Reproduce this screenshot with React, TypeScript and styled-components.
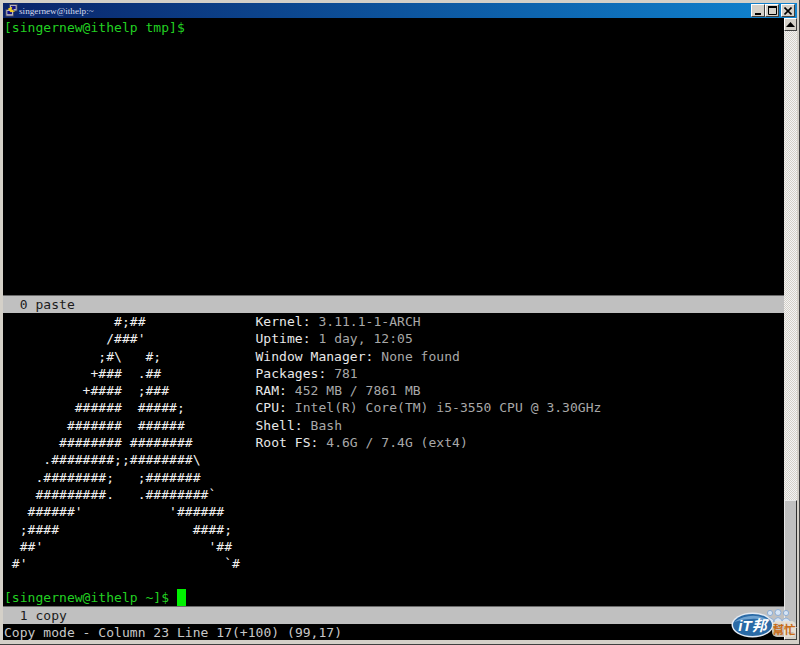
import React from 'react';
import styled, { createGlobalStyle } from 'styled-components';

const ART = [
  "              #;##",
  "             /###'",
  "            ;#\\   #;",
  "           +###  .##",
  "          +####  ;###",
  "         ######  #####;",
  "        #######  ######",
  "       ######## ########",
  "     .########;;########\\",
  "    .########;   ;#######",
  "    #########.   .########`",
  "   ######'           '######",
  "  ;####                 ####;",
  "  ##'                     '##",
  " #'                         `#",
];

const INFO = [
  ['Kernel:', '3.11.1-1-ARCH'],
  ['Uptime:', '1 day, 12:05'],
  ['Window Manager:', 'None found'],
  ['Packages:', '781'],
  ['RAM:', '452 MB / 7861 MB'],
  ['CPU:', 'Intel(R) Core(TM) i5-3550 CPU @ 3.30GHz'],
  ['Shell:', 'Bash'],
  ['Root FS:', '4.6G / 7.4G (ext4)'],
];

const App: React.FC = () => {
  return (
    <Window>
      <GlobalStyle />
      <TitleBar>
        <TitleIcon viewBox="0 0 14 14">
          <rect x="5" y="0.5" width="8" height="7" fill="#c8c8c8" stroke="#404060" />
          <rect x="6.5" y="2" width="5" height="3.5" fill="#10108a" />
          <rect x="1" y="6" width="8" height="7" fill="#c8c8c8" stroke="#404060" />
          <rect x="2.5" y="7.5" width="5" height="3.5" fill="#10108a" />
          <path d="M3 5 L8 3 L7 6 L11 8 L6 9 Z" fill="#f4d020" />
        </TitleIcon>
        <TitleText>singernew@ithelp:~</TitleText>
        <TitleButtons>
          <CaptionButton>
            <svg width="8" height="8" viewBox="0 0 8 8"><rect x="1" y="6" width="6" height="2" fill="#000" /></svg>
          </CaptionButton>
          <CaptionButton>
            <svg width="9" height="9" viewBox="0 0 9 9"><path d="M0.5 1.5H8.5V8.5H0.5Z" fill="none" stroke="#000" /><rect x="0" y="0" width="9" height="2" fill="#000" /></svg>
          </CaptionButton>
          <CloseButton>
            <svg width="8" height="8" viewBox="0 0 8 8"><path d="M0.5 0.5L7.5 7.5M7.5 0.5L0.5 7.5" stroke="#000" strokeWidth="1.6" /></svg>
          </CloseButton>
        </TitleButtons>
      </TitleBar>
      <Body>
        <Terminal>
          <TopPane>
            <Prompt>[singernew@ithelp tmp]$</Prompt>
          </TopPane>
          <StatusBar>  0 paste</StatusBar>
          <BottomPane>
            <FetchBlock>
              <Art>{ART.join('\n')}</Art>
              <InfoList>
                {INFO.map(([label, value]) => (
                  <InfoRow key={label}>
                    <InfoLabel>{label}</InfoLabel> <InfoValue>{value}</InfoValue>
                  </InfoRow>
                ))}
              </InfoList>
            </FetchBlock>
            <BlankRow />
            <Prompt>
              [singernew@ithelp ~]$ <Cursor />
            </Prompt>
          </BottomPane>
          <StatusBar>  1 copy</StatusBar>
          <MessageRow>Copy mode - Column 23 Line 17(+100) (99,17)</MessageRow>
        </Terminal>
        <Scrollbar>
          <ScrollButton>
            <svg width="9" height="5" viewBox="0 0 9 5"><path d="M4.5 0L9 5H0Z" fill="#000" /></svg>
          </ScrollButton>
          <ScrollTrack />
          <ScrollThumb />
          <ScrollButton>
            <svg width="7" height="4" viewBox="0 0 7 4"><path d="M0 0H7L3.5 4Z" fill="#000" /></svg>
          </ScrollButton>
        </Scrollbar>
      </Body>
      <Badge viewBox="0 0 68 34">
        <g fill="#d6e4f4" stroke="#86a8d2" strokeWidth="0.9">
          <circle cx="40" cy="5" r="2.6" />
          <circle cx="48" cy="4.5" r="3" />
          <circle cx="56" cy="5" r="2.6" />
          <path d="M35 14q5-8 10 0M43 14q5-9 10 0M51 14q5-8 10 0" />
        </g>
        <rect x="42" y="13" width="24" height="16" rx="5" fill="#e8e2d6" opacity="0.85" />
        <ellipse cx="22.5" cy="17" rx="21" ry="12.5" fill="#e4ebf4" />
        <ellipse cx="22.5" cy="17" rx="19.5" ry="11" fill="#2a6aa6" />
        <path d="M4 14Q22 2 41 13Q22 8 4 14Z" fill="#6ea2d0" />
        <BadgeLogoText x="22.5" y="23" textAnchor="middle">iT邦</BadgeLogoText>
        <BadgeHelpText x="54" y="26" textAnchor="middle">幫忙</BadgeHelpText>
      </Badge>
    </Window>
  );
};

export default App;

const GlobalStyle = createGlobalStyle`
  html, body {
    margin: 0;
    padding: 0;
    background: #d4d0c8;
    overflow: hidden;
  }
`;

const Window = styled.div`
  position: relative;
  width: 800px;
  height: 645px;
  box-sizing: border-box;
  padding: 3px 2px 4px 3px;
  display: flex;
  flex-direction: column;
  background: #d4d0c8;
  border-right: 1px solid #404040;
  border-bottom: 1px solid #404040;
  overflow: hidden;
  font-family: "DejaVu Sans Mono", "Liberation Mono", monospace;
`;

const TitleBar = styled.div`
  height: 15px;
  flex: none;
  display: flex;
  align-items: center;
  padding-left: 2px;
  background: linear-gradient(90deg, #0a246a 0%, #1084d0 100%);
`;

const TitleIcon = styled.svg`
  width: 13px;
  height: 13px;
  flex: none;
`;

const TitleText = styled.span`
  margin-left: 1px;
  font-family: "Liberation Serif", serif;
  font-size: 9.2px;
  color: #d4daec;
`;

const TitleButtons = styled.div`
  margin-left: auto;
  display: flex;
  padding-right: 2px;
`;

const CaptionButton = styled.div`
  width: 12px;
  height: 11px;
  box-sizing: content-box;
  display: flex;
  align-items: center;
  justify-content: center;
  background: #d4d0c8;
  border: 1px solid;
  border-color: #fff #404040 #404040 #fff;
`;

const CloseButton = styled(CaptionButton)`
  margin-left: 2px;
`;

const Body = styled.div`
  flex: 1;
  min-height: 0;
  display: flex;
`;

const Terminal = styled.div`
  flex: 1;
  min-width: 0;
  background: #000;
  display: flex;
  flex-direction: column;
  font-size: 13px;
  letter-spacing: 0.035px;
  line-height: 17.3px;
  white-space: pre;
  color: #c0c0c0;
`;

const TopPane = styled.div`
  height: 277px;
  flex: none;
  box-sizing: border-box;
  padding: 1px 0 0 1px;
`;

const BottomPane = styled.div`
  flex: none;
  height: 293px;
  padding-left: 1px;
`;

const StatusBar = styled.div`
  flex: none;
  height: 18px;
  padding-left: 1px;
  box-sizing: border-box;
  background: #c0c0c0;
  color: #1c1c1c;
  border-top: 1px solid #6a6a6a;
  line-height: 17px;
`;

const Prompt = styled.div`
  color: #22d022;
  height: 17.3px;
`;

const Cursor = styled.span`
  display: inline-block;
  width: 9px;
  height: 17px;
  background: #00f000;
  vertical-align: top;
`;

const FetchBlock = styled.div`
  display: grid;
  grid-template-columns: 251.5px 1fr;
`;

const Art = styled.div`
  color: #f0f0f0;
`;

const InfoList = styled.div`
  display: flex;
  flex-direction: column;
`;

const InfoRow = styled.div`
  height: 17.3px;
`;

const InfoLabel = styled.span`
  color: #e8e8e8;
`;

const InfoValue = styled.span`
  color: #a8a8a8;
`;

const BlankRow = styled.div`
  height: 16.3px;
`;

const MessageRow = styled.div`
  flex: none;
  height: 17px;
  padding-left: 1px;
  color: #c8c8c8;
`;

const Scrollbar = styled.div`
  flex: none;
  width: 13px;
  display: flex;
  flex-direction: column;
  background: #d4d0c8;
`;

const ScrollButton = styled.div`
  flex: none;
  height: 13px;
  box-sizing: border-box;
  display: flex;
  align-items: center;
  justify-content: center;
  background: #d4d0c8;
  border: 1px solid;
  border-color: #fff #404040 #404040 #fff;
`;

const ScrollTrack = styled.div`
  height: 469px;
  flex: none;
  background-color: #eeeeee;
  background-image: repeating-conic-gradient(#d4d0c8 0% 25%, #f4f4f4 0% 50%);
  background-size: 2px 2px;
`;

const ScrollThumb = styled.div`
  flex: 1;
  box-sizing: border-box;
  background: #c0c0c0;
  border: 1px solid;
  border-color: #e8e8e8 #303030 #303030 #e8e8e8;
`;

const Badge = styled.svg`
  position: absolute;
  left: 730px;
  top: 608px;
  width: 68px;
  height: 34px;
`;

const BadgeLogoText = styled.text`
  font-family: "Liberation Sans", "Noto Sans CJK TC", sans-serif;
  font-size: 15px;
  font-weight: 700;
  font-style: italic;
  fill: #ffffff;
`;

const BadgeHelpText = styled.text`
  font-family: "Noto Sans CJK TC", sans-serif;
  font-size: 11.5px;
  font-weight: 700;
  fill: #c86a14;
`;
